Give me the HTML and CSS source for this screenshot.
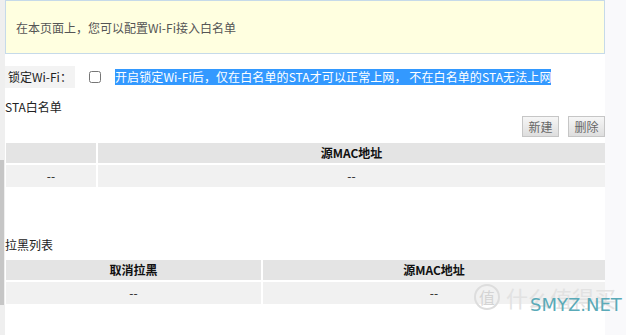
FILE: index.html
```html
<!DOCTYPE html>
<html lang="zh-CN">
<head>
  <meta charset="UTF-8">
  <title>Wi-Fi白名单</title>
  <link rel="stylesheet" href="styles.css">
</head>
<body>

<div class="rail"><div class="thumb"></div></div>

<div class="main">
  <div class="notice">在本页面上，您可以配置Wi-Fi接入白名单</div>

  <div class="lock-row">
    <div class="lock-label">锁定Wi-Fi：</div>
    <input type="checkbox" class="lock-check">
    <span class="lock-tip">开启锁定Wi-Fi后，仅在白名单的STA才可以正常上网， 不在白名单的STA无法上网</span>
  </div>

  <div class="title">STA白名单</div>
  <div class="toolbar">
    <button class="btn">新建</button>
    <button class="btn">删除</button>
  </div>
  <div class="grid grid-sta">
    <div class="th"></div>
    <div class="th">源MAC地址</div>
    <div class="td">--</div>
    <div class="td">--</div>
  </div>

  <div class="title title-black">拉黑列表</div>
  <div class="grid grid-black">
    <div class="th">取消拉黑</div>
    <div class="th">源MAC地址</div>
    <div class="td">--</div>
    <div class="td">--</div>
  </div>
</div>

<div class="side"></div>

<div class="watermark">
  <span class="wm-logo">值</span>
  <span class="wm-cn">什么值得买</span>
  <span class="wm-en">SMYZ.NET</span>
</div>

</body>
</html>
```

FILE: styles.css
```css
body { margin: 0; display: flex; height: 335px; overflow: hidden; background: #f9f9fb; font-family: "Noto Sans CJK SC", "DejaVu Sans", sans-serif; font-size: 12px; color: #222; }

.rail { width: 5px; background: #efefef; flex-shrink: 0; }
.thumb { width: 4px; height: 145px; margin-top: 160px; background: #c6c6c6; }

.main { width: 600px; background: #fff; flex-shrink: 0; }
.side { flex: 1; background: #f9f9fb; }

.notice { height: 52px; border: 1px solid #c6dae9; background: #ffffe0; color: #555; display: flex; align-items: center; padding-left: 10px; }

.lock-row { display: flex; align-items: center; height: 22px; margin-top: 12px; }
.lock-label { width: 67px; height: 22px; line-height: 22px; padding-left: 3px; background: #f3f3f3; }
.lock-check { width: 12px; height: 12px; margin: 0 14px 0 14px; }
.lock-tip { background: #3399ff; color: #fff; line-height: 16px; letter-spacing: 0.1px; }

.title { height: 18px; line-height: 18px; margin-top: 10px; }
.title-black { margin-top: 49px; }

.toolbar { display: flex; justify-content: flex-end; gap: 9px; height: 21px; }
.btn { width: 37px; height: 21px; padding: 0; border: 1px solid #c6c6c6; background: linear-gradient(#f6f6f6, #dedede); color: #666; font-family: inherit; font-size: 12px; }

.grid { display: grid; gap: 2px; margin-left: 1px; width: 599px; margin-top: 6px; }
.grid-sta { grid-template-columns: 90px 1fr; }
.grid-black { grid-template-columns: 255px 1fr; }
.th { height: 20px; line-height: 20px; background: #e4e4e4; text-align: center; font-weight: bold; color: #111; }
.td { height: 22px; line-height: 22px; background: #f1f1f1; text-align: center; }

.watermark { position: absolute; left: 474px; top: 284px; width: 152px; display: flex; align-items: center; white-space: nowrap; }
.wm-logo { width: 22px; height: 22px; border: 2px solid #ddd; border-radius: 50%; color: #d4d4d4; font-size: 16px; line-height: 22px; text-align: center; flex-shrink: 0; }
.wm-cn { margin-left: 6px; font-size: 22px; line-height: 26px; color: #e2e2e2; }
.wm-en { position: absolute; left: 56px; top: 10px; font-family: "DejaVu Sans", sans-serif; font-size: 18px; color: #5aaab8; }
```
